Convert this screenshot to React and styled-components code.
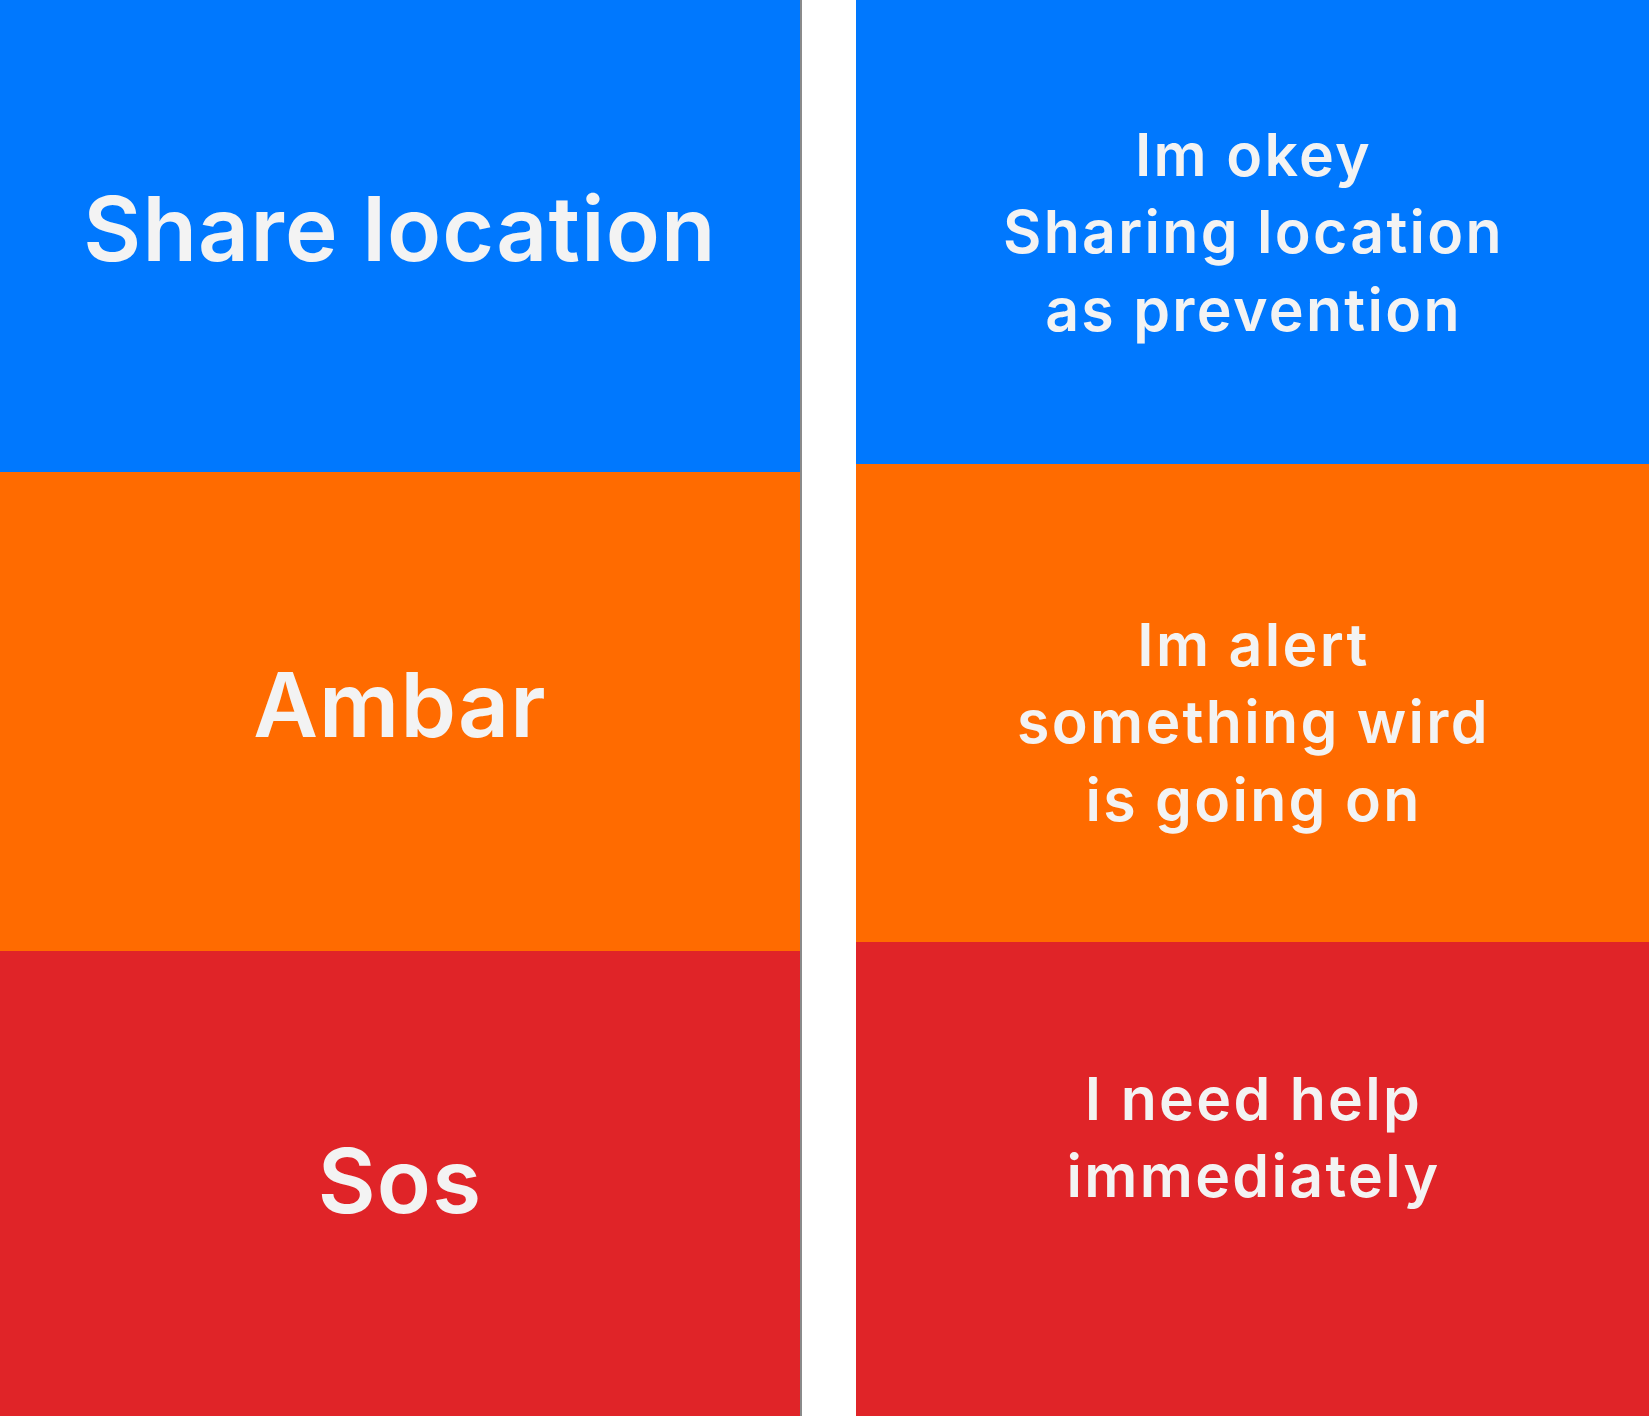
import React from "react";
import styled, { createGlobalStyle } from "styled-components";

const Global = createGlobalStyle`
  html, body { margin: 0; padding: 0; background: #ffffff; }
  body { font-family: Inter, "Noto Sans", sans-serif; }
`;

const Page = styled.div`
  display: flex;
  width: 1649px;
  height: 1416px;
  gap: 54px;
  background: #ffffff;
  overflow: hidden;
`;

const Column = styled.div`
  display: flex;
  flex-direction: column;
  width: ${(p) => p.$width}px;
  flex-shrink: 0;
  border-right: ${(p) => (p.$divider ? "2px solid #8a8a8a" : "none")};
`;

const Panel = styled.div`
  display: flex;
  align-items: center;
  justify-content: center;
  height: ${(p) => p.$height}px;
  background: ${(p) => p.$color};
  padding-bottom: ${(p) => p.$lift || 0}px;
  padding-top: ${(p) => p.$drop || 0}px;
  box-sizing: border-box;
`;

const BigLabel = styled.div`
  color: #f3f3f3;
  font-size: 89px;
  font-weight: 600;
  line-height: 1;
  white-space: nowrap;
  letter-spacing: 1.2px;
`;

const Message = styled.div`
  color: #f3f3f3;
  font-size: 59px;
  font-weight: 600;
  line-height: 77.5px;
  text-align: center;
  white-space: pre-line;
  letter-spacing: 2.3px;
`;

const BLUE = "#0078fe";
const ORANGE = "#ff6b00";
const RED = "#e02428";

export default function App() {
  return (
    <>
      <Global />
      <Page>
        <Column $width={800} $divider>
          <Panel $height={472} $color={BLUE} $lift={16}>
            <BigLabel>Share location</BigLabel>
          </Panel>
          <Panel $height={479} $color={ORANGE} $lift={15}>
            <BigLabel>Ambar</BigLabel>
          </Panel>
          <Panel $height={465} $color={RED} $lift={6}>
            <BigLabel>Sos</BigLabel>
          </Panel>
        </Column>
        <Column $width={795}>
          <Panel $height={464} $color={BLUE}>
            <Message>{"Im okey\nSharing location\nas prevention"}</Message>
          </Panel>
          <Panel $height={478} $color={ORANGE} $drop={38}>
            <Message>{"Im alert\nsomething wird\nis going on"}</Message>
          </Panel>
          <Panel $height={474} $color={RED} $lift={84}>
            <Message>{"I need help\nimmediately"}</Message>
          </Panel>
        </Column>
      </Page>
    </>
  );
}
